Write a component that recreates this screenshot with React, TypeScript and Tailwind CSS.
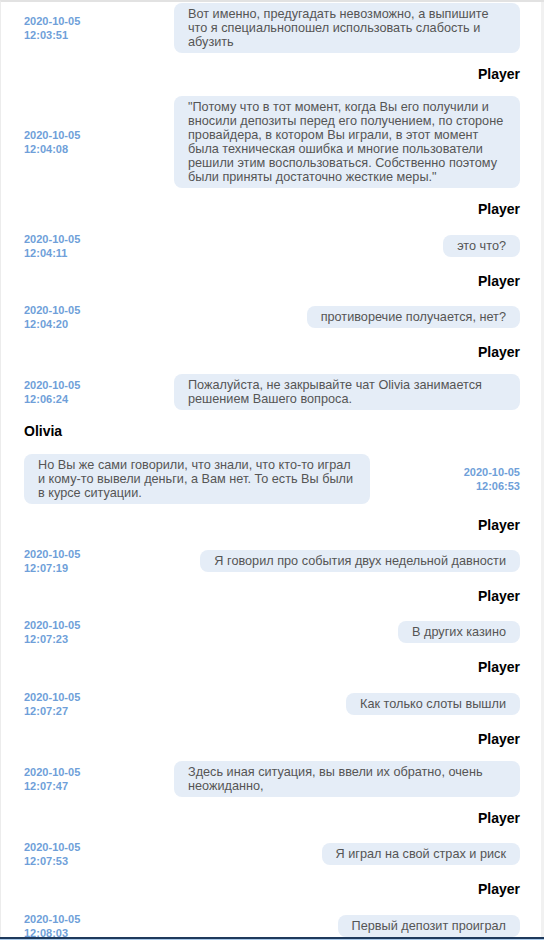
import React from "react";

type Msg = {
  from: "Player" | "Olivia";
  showName?: boolean;
  date: string;
  time: string;
  text: string;
};

const messages: Msg[] = [
  {
    from: "Player",
    date: "2020-10-05",
    time: "12:03:51",
    text: "Вот именно, предугадать невозможно, а выпишите что я специальнопошел использовать слабость и абузить",
  },
  {
    from: "Player",
    showName: true,
    date: "2020-10-05",
    time: "12:04:08",
    text: "\"Потому что в тот момент, когда Вы его получили и вносили депозиты перед его получением, по стороне провайдера, в котором Вы играли, в этот момент была техническая ошибка и многие пользователи решили этим воспользоваться. Собственно поэтому были приняты достаточно жесткие меры.\"",
  },
  { from: "Player", showName: true, date: "2020-10-05", time: "12:04:11", text: "это что?" },
  {
    from: "Player",
    showName: true,
    date: "2020-10-05",
    time: "12:04:20",
    text: "противоречие получается, нет?",
  },
  {
    from: "Player",
    showName: true,
    date: "2020-10-05",
    time: "12:06:24",
    text: "Пожалуйста, не закрывайте чат Olivia занимается решением Вашего вопроса.",
  },
  {
    from: "Olivia",
    showName: true,
    date: "2020-10-05",
    time: "12:06:53",
    text: "Но Вы же сами говорили, что знали, что кто-то играл и кому-то вывели деньги, а Вам нет. То есть Вы были в курсе ситуации.",
  },
  {
    from: "Player",
    showName: true,
    date: "2020-10-05",
    time: "12:07:19",
    text: "Я говорил про события двух недельной давности",
  },
  { from: "Player", showName: true, date: "2020-10-05", time: "12:07:23", text: "В других казино" },
  { from: "Player", showName: true, date: "2020-10-05", time: "12:07:27", text: "Как только слоты вышли" },
  {
    from: "Player",
    showName: true,
    date: "2020-10-05",
    time: "12:07:47",
    text: "Здесь иная ситуация, вы ввели их обратно, очень неожиданно,",
  },
  { from: "Player", showName: true, date: "2020-10-05", time: "12:07:53", text: "Я играл на свой страх и риск" },
  { from: "Player", showName: true, date: "2020-10-05", time: "12:08:03", text: "Первый депозит проиграл" },
];

function Stamp({ date, time, right }: { date: string; time: string; right?: boolean }) {
  return (
    <div
      className={`shrink-0 text-[11px] font-bold leading-[14px] text-[#6f9fd9] ${right ? "text-right" : ""}`}
    >
      <div>{date}</div>
      <div>{time}</div>
    </div>
  );
}

function Bubble({ text }: { text: string }) {
  return (
    <div className="max-w-[346px] rounded-[8px] bg-[#e5edf7] px-[14px] py-[4px] text-[12.7px] leading-[14px] text-[#555555]">
      {text}
    </div>
  );
}

export default function App() {
  return (
    <div
      className="flex h-[940px] w-[544px] flex-col overflow-hidden bg-white"
      style={{ fontFamily: '"Liberation Sans", Arial, sans-serif' }}
    >
      <div className="flex min-h-0 flex-1 border-t-2 border-l border-t-[#e2e2e2] border-l-[#ececec]">
        <div className="min-w-0 flex-1 overflow-hidden pl-[23px] pr-[21px] pt-[1px]">
          {messages.map((m, i) => {
            const mine = m.from === "Player";
            return (
              <div key={i}>
                {m.showName && (
                  <div
                    className={`mt-[14px] mb-[14px] text-[14px] font-bold leading-[15.33px] text-black ${
                      mine ? "text-right" : "text-left"
                    }`}
                  >
                    {m.from}
                  </div>
                )}
                <div className="flex items-center justify-between gap-4">
                  {mine ? (
                    <>
                      <Stamp date={m.date} time={m.time} />
                      <Bubble text={m.text} />
                    </>
                  ) : (
                    <>
                      <Bubble text={m.text} />
                      <Stamp date={m.date} time={m.time} right />
                    </>
                  )}
                </div>
              </div>
            );
          })}
        </div>
        <div className="w-[3px] shrink-0 bg-[#f1f1f1]" />
      </div>
      <div className="h-[3px] shrink-0 border-t-2 border-[#1f3a5c] bg-[#a9c8e8]" />
    </div>
  );
}
